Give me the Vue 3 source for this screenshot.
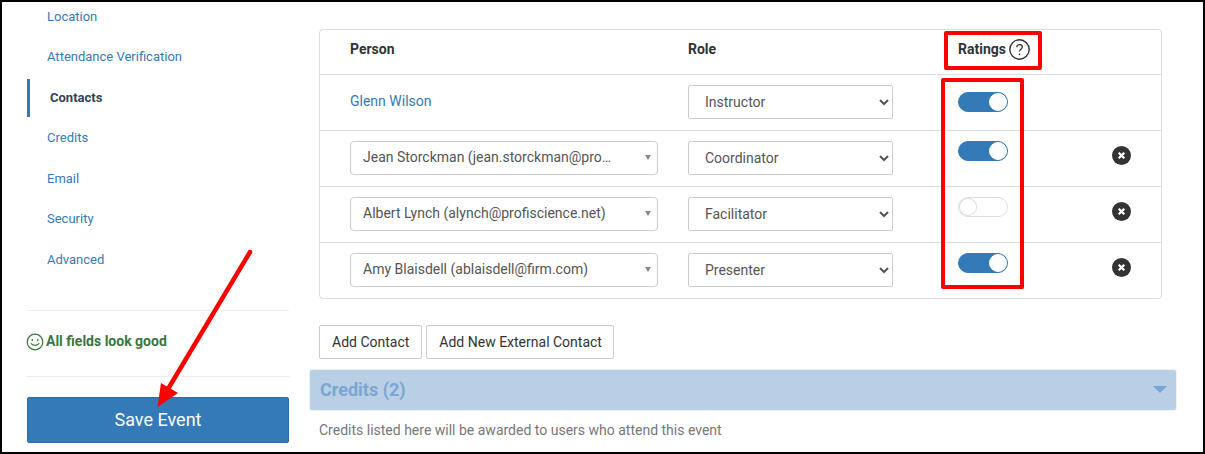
<script setup>
const nav = [
  { label: 'Location' },
  { label: 'Attendance Verification' },
  { label: 'Contacts', active: true },
  { label: 'Credits' },
  { label: 'Email' },
  { label: 'Security' },
  { label: 'Advanced' },
]
const rows = [
  { link: 'Glenn Wilson', role: 'Instructor', on: true },
  { person: 'Jean Storckman (jean.storckman@profiscience.net)', role: 'Coordinator', on: true, remove: true },
  { person: 'Albert Lynch (alynch@profiscience.net)', role: 'Facilitator', on: false, remove: true },
  { person: 'Amy Blaisdell (ablaisdell@firm.com)', role: 'Presenter', on: true, remove: true },
]
const roles = ['Instructor', 'Coordinator', 'Facilitator', 'Presenter']
</script>

<template>
  <div class="page">
    <aside class="side">
      <nav class="nav">
        <a v-for="n in nav" :key="n.label" class="nav-item" :class="{ active: n.active }">{{ n.label }}</a>
      </nav>
      <div class="status">
        <svg class="smile" viewBox="0 0 18 18" width="18" height="18" fill="none" stroke="#3c763d" stroke-width="1.2">
          <circle cx="9" cy="9" r="7.8" />
          <circle cx="6.3" cy="7" r="0.9" fill="#3c763d" stroke="none" />
          <circle cx="11.7" cy="7" r="0.9" fill="#3c763d" stroke="none" />
          <path d="M5.2 10.6c1 2.3 6.6 2.3 7.6 0" stroke-linecap="round" />
        </svg>
        <span class="status-text">All fields look good</span>
      </div>
      <button class="save">Save Event</button>
    </aside>

    <main class="main">
      <div class="table">
        <div class="row head">
          <div>Person</div>
          <div>Role</div>
          <div class="rate-head">
            Ratings
            <svg viewBox="0 0 21 21" width="21" height="21" fill="none" stroke="#333">
              <circle cx="10.5" cy="10.5" r="9.7" stroke-width="1.4" />
              <path d="M7.8 8.2c0-1.6 1.2-2.6 2.8-2.6s2.7 1 2.7 2.4c0 2.2-2.8 2.2-2.8 4.6" stroke-width="1.3" />
              <circle cx="10.5" cy="15.3" r="0.9" fill="#333" stroke="none" />
            </svg>
          </div>
        </div>
        <div v-for="(r, i) in rows" :key="r.role" class="row" :class="{ first: i === 0 }">
          <div>
            <a v-if="r.link" class="person-link">{{ r.link }}</a>
            <div v-else class="combo">
              <span class="combo-text">{{ r.person }}</span>
              <span class="caret"></span>
            </div>
          </div>
          <div class="role-cell">
            <select class="role" :value="r.role">
              <option v-for="o in roles" :key="o">{{ o }}</option>
            </select>
          </div>
          <div class="toggle" :class="{ on: r.on }"><span class="knob"></span></div>
          <div v-if="r.remove" class="remove">
            <svg viewBox="0 0 19 19" width="19" height="19">
              <circle cx="9.5" cy="9.5" r="9.5" fill="#333" />
              <path d="M6.7 6.7l5.6 5.6M12.3 6.7l-5.6 5.6" stroke="#fff" stroke-width="2.2" />
            </svg>
          </div>
        </div>
      </div>

      <div class="actions">
        <button class="btn">Add Contact</button>
        <button class="btn">Add New External Contact</button>
      </div>

      <div class="credits-bar">
        <span>Credits (2)</span>
        <span class="tri"></span>
      </div>
      <p class="hint">Credits listed here will be awarded to users who attend this event</p>
    </main>

    <div class="mark mark-head"></div>
    <div class="mark mark-col"></div>
    <svg class="arrow" width="300" height="454" viewBox="0 0 300 454">
      <path d="M250 252L168 389" stroke="#f00" stroke-width="4.500" stroke-linecap="round" fill="none" />
      <path d="M157.500 407L161 383L178 393Z" fill="#f00" />
    </svg>
  </div>
</template>

<style>
html, body { margin: 0; background: #fff; }
</style>

<style scoped>
* { box-sizing: border-box; }
.page {
  position: relative;
  display: flex;
  width: 1205px;
  height: 454px;
  border: 2px solid #000;
  overflow: hidden;
  background: #fff;
  font-family: Roboto, "Liberation Sans", sans-serif;
  font-size: 14px;
  color: #333;
}
.side {
  width: 262px;
  margin-left: 25px;
  flex: none;
}
.nav {
  display: flex;
  flex-direction: column;
  gap: 2.5px;
  margin-top: -4.5px;
  border-bottom: 1px solid #eee;
  height: 313.500px;
}
.nav-item {
  height: 38px;
  flex: none;
  line-height: 38px;
  padding-left: 20px;
  font-size: 13px;
  color: #337ab7;
}
.nav-item.active {
  border-left: 3px solid #337ab7;
  font-weight: 700;
  color: #2f4358;
}
.status {
  display: flex;
  align-items: center;
  gap: 2px;
  height: 66px;
  padding-bottom: 4px;
  border-bottom: 1px solid #eee;
  font-weight: 700;
  font-size: 14px;
  color: #3c763d;
  margin: 0 -1px;
}
.status-text { margin-bottom: 2px; }
.save {
  display: block;
  width: 262px;
  height: 46px;
  margin-top: 20px;
  padding: 0 0 2px;
  border: 1px solid #2e6da4;
  border-radius: 2px;
  background: #337ab7;
  color: #fff;
  font-family: inherit;
  font-size: 18px;
}
.main {
  flex: none;
  width: 866px;
  margin-left: 21px;
  padding-top: 27px;
}
.table {
  width: 843px;
  margin-left: 9px;
  height: 270px;
  border: 1px solid #ddd;
  border-radius: 4px;
}
.row {
  display: grid;
  grid-template-columns: 338px 270px 154px 19px;
  height: 56px;
  padding-left: 30px;
  border-top: 1px solid #ddd;
  align-items: start;
}
.row.head {
  height: 44px;
  padding-bottom: 6px;
  border-top: 0;
  align-items: center;
  font-weight: 700;
}
.rate-head {
  display: flex;
  align-items: center;
  gap: 3px;
}
.person-link {
  display: block;
  margin-top: 18px;
  color: #337ab7;
}
.combo {
  position: relative;
  display: flex;
  align-items: center;
  width: 308px;
  height: 34px;
  margin-top: 10px;
  padding: 0 41px 2px 12px;
  border: 1px solid #ccc;
  border-radius: 4px;
  color: #555;
}
.combo-text {
  overflow: hidden;
  white-space: nowrap;
  text-overflow: ellipsis;
}
.caret {
  position: absolute;
  right: 6px;
  top: 13px;
  border: 3.500px solid transparent;
  border-top: 5px solid #888;
  border-bottom: 0;
}
.role {
  display: block;
  width: 205px;
  height: 34px;
  margin-top: 10px;
  padding: 0 12px;
  border: 1px solid #ccc;
  border-radius: 2px;
  background: #fff;
  font-family: inherit;
  font-size: 14px;
  color: #555;
}
.toggle {
  display: flex;
  justify-content: flex-start;
  width: 50px;
  height: 20px;
  margin-top: 10px;
  border: 1px solid #ddd;
  border-radius: 10px;
  background: #fff;
}
.row.first .toggle { margin-top: 17px; }
.toggle.on {
  justify-content: flex-end;
  border-color: #337ab7;
  background: #337ab7;
}
.knob {
  width: 18px;
  height: 18px;
  border-radius: 50%;
  background: #fff;
  border: 1px solid #ddd;
}
.toggle.on .knob { border-color: #fff; }
.remove {
  height: 19px;
  margin-top: 15px;
}
.remove svg { display: block; }
.actions {
  display: flex;
  gap: 4px;
  margin: 26px 0 0 9px;
}
.btn {
  height: 34px;
  padding: 0 12px;
  border: 1px solid #ccc;
  border-radius: 2px;
  background: #fff;
  font-family: inherit;
  font-size: 14px;
  color: #333;
}
.btn + .btn { padding-right: 11px; }
.credits-bar {
  display: flex;
  align-items: center;
  justify-content: space-between;
  height: 40px;
  margin-top: 11px;
  padding: 0 9px 2px 10px;
  border-radius: 2px;
  background: #b8cfe6;
  box-shadow: 0 0 0 1px #eef2f6;
  font-size: 18px;
  font-weight: 700;
  color: #7aa6d3;
}
.tri {
  border: 7px solid transparent;
  border-top: 7px solid #7aa6d3;
  border-bottom: 0;
}
.hint {
  margin: 12px 0 0 9px;
  line-height: 16px;
  color: #777;
}
.mark {
  position: absolute;
  border: 4px solid #f00;
  border-radius: 2px;
  pointer-events: none;
}
.mark-head {
  left: 942px;
  top: 29px;
  width: 98px;
  height: 39px;
}
.mark-col {
  left: 939px;
  top: 76px;
  width: 83px;
  height: 211px;
}
.arrow {
  position: absolute;
  left: -2px;
  top: -2px;
  pointer-events: none;
}
</style>
